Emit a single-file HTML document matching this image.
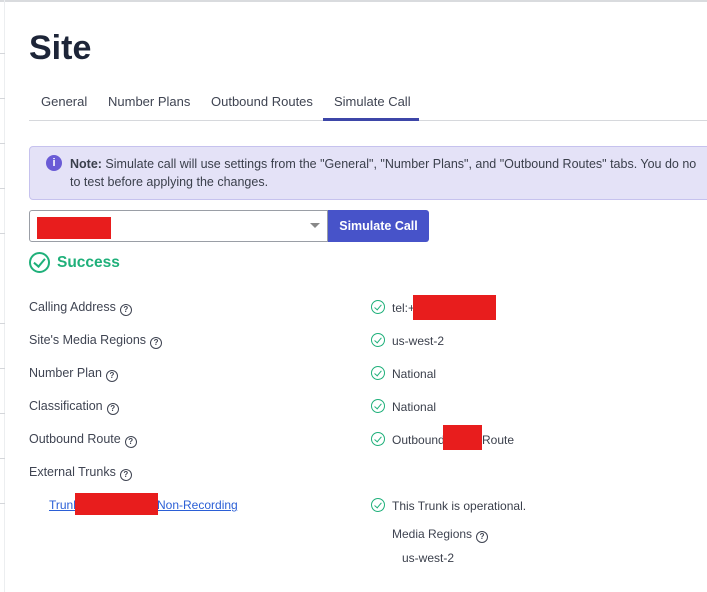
<!DOCTYPE html><html><head><style>
body{margin:0;width:707px;height:592px;background:#fff;font-family:"Liberation Sans",sans-serif;position:relative;overflow:hidden;color:#3a3f4b}
.a{position:absolute;white-space:nowrap}
.tick{position:absolute;left:0;width:5px;height:1px;background:#d4d6da}
.lbl{font-size:12.5px;color:#3f4452}
.q{display:inline-block;width:10px;height:10px;border:1.3px solid #3f4452;border-radius:50%;font-size:8px;line-height:10px;text-align:center;font-weight:bold;margin-left:4px;vertical-align:-1px}
.ck{position:absolute;width:12px;height:12px;border:1.6px solid #1fb07a;border-radius:50%}
.ck:after{content:"";position:absolute;left:3.5px;top:1.5px;width:3px;height:6px;border:solid #1fb07a;border-width:0 1.6px 1.6px 0;transform:rotate(40deg)}
.val{font-size:12px;color:#3a3f4b}
.red{position:absolute;background:#e81d1d}
</style></head><body>
<div class="a" style="left:0;top:0;width:707px;height:2px;background:#d9dbde"></div>
<div class="a" style="left:4px;top:0;width:1px;height:592px;background:#eceef0"></div>
<div class="tick" style="top:53px"></div><div class="tick" style="top:98px"></div><div class="tick" style="top:143px"></div><div class="tick" style="top:188px"></div><div class="tick" style="top:233px"></div><div class="tick" style="top:323px"></div><div class="tick" style="top:368px"></div><div class="tick" style="top:413px"></div><div class="tick" style="top:458px"></div><div class="tick" style="top:503px"></div>
<div class="a" style="left:29px;top:29px;font-size:34px;font-weight:bold;color:#1d2538">Site</div>
<div class="a" style="left:41px;top:94px;font-size:13px;color:#3f4452">General</div>
<div class="a" style="left:108px;top:94px;font-size:13px;color:#3f4452">Number Plans</div>
<div class="a" style="left:211px;top:94px;font-size:13px;color:#3f4452">Outbound Routes</div>
<div class="a" style="left:334px;top:94px;font-size:13px;color:#3f4452">Simulate Call</div>
<div class="a" style="left:29px;top:120px;width:678px;height:1px;background:#d6d8dc"></div>
<div class="a" style="left:323px;top:118px;width:96px;height:3px;background:#3d46a8"></div>
<div class="a" style="left:29px;top:146px;width:690px;height:52px;background:#e4e2f7;border:1px solid #c6c2ee;border-radius:4px"></div>
<div class="a" style="left:46px;top:155px;width:16px;height:16px;border-radius:50%;background:#6a5bd6;color:#fff;font-size:11px;font-weight:bold;text-align:center;line-height:16px">i</div>
<div class="a" style="left:70px;top:155px;font-size:12.5px;color:#3a3f4b;line-height:18px"><b>Note:</b> Simulate call will use settings from the "General", "Number Plans", and "Outbound Routes" tabs. You do no<br>to test before applying the changes.</div>
<div class="a" style="left:29px;top:210px;width:299px;border:1px solid #9a9ea6;border-radius:3px 0 0 3px;box-sizing:border-box;height:32px"></div>
<div class="red" style="left:37px;top:217px;width:74px;height:22px"></div>
<div class="a" style="left:310px;top:223px;width:0;height:0;border-left:5px solid transparent;border-right:5px solid transparent;border-top:5px solid #888"></div>
<div class="a" style="left:328px;top:210px;width:101px;height:32px;background:#4753c9;border-radius:0 3px 3px 0;color:#fff;font-weight:bold;font-size:12.5px;text-align:center;line-height:32px">Simulate Call</div>
<div class="a" style="left:29px;top:252px;width:21px;height:21px;border:2px solid #1fb07a;border-radius:50%;box-sizing:border-box"></div>
<div class="a" style="left:36px;top:256px;width:5px;height:9px;border:solid #1fb07a;border-width:0 2px 2px 0;transform:rotate(40deg)"></div>
<div class="a" style="left:57px;top:254px;font-size:15.5px;font-weight:bold;color:#1fb07a">Success</div>

<div class="a lbl" style="left:29px;top:300px">Calling Address<span class="q">?</span></div>
<div class="a lbl" style="left:29px;top:333px">Site's Media Regions<span class="q">?</span></div>
<div class="a lbl" style="left:29px;top:366px">Number Plan<span class="q">?</span></div>
<div class="a lbl" style="left:29px;top:399px">Classification<span class="q">?</span></div>
<div class="a lbl" style="left:29px;top:432px">Outbound Route<span class="q">?</span></div>
<div class="a lbl" style="left:29px;top:465px">External Trunks<span class="q">?</span></div>
<div class="a" style="left:49px;top:498px;font-size:12px;color:#2b5fd6;text-decoration:underline">Trunk</div>
<div class="a" style="left:157px;top:498px;font-size:12px;color:#2b5fd6;text-decoration:underline">Non-Recording</div>
<div class="red" style="left:75px;top:493px;width:83px;height:22px"></div>

<div class="ck" style="left:371px;top:300px"></div><div class="a val" style="left:392px;top:301px">tel:+</div><div class="red" style="left:413px;top:295px;width:83px;height:25px"></div>
<div class="ck" style="left:371px;top:333px"></div><div class="a val" style="left:392px;top:334px">us-west-2</div>
<div class="ck" style="left:371px;top:366px"></div><div class="a val" style="left:392px;top:367px">National</div>
<div class="ck" style="left:371px;top:399px"></div><div class="a val" style="left:392px;top:400px">National</div>
<div class="ck" style="left:371px;top:432px"></div><div class="a val" style="left:392px;top:433px">Outbound</div><div class="a val" style="left:482px;top:433px">Route</div><div class="red" style="left:443px;top:425px;width:39px;height:25px"></div>
<div class="ck" style="left:371px;top:498px"></div><div class="a val" style="left:392px;top:499px">This Trunk is operational.</div>
<div class="a lbl" style="left:392px;top:527px;font-size:12px">Media Regions<span class="q">?</span></div>
<div class="a val" style="left:402px;top:551px">us-west-2</div>
</body></html>
